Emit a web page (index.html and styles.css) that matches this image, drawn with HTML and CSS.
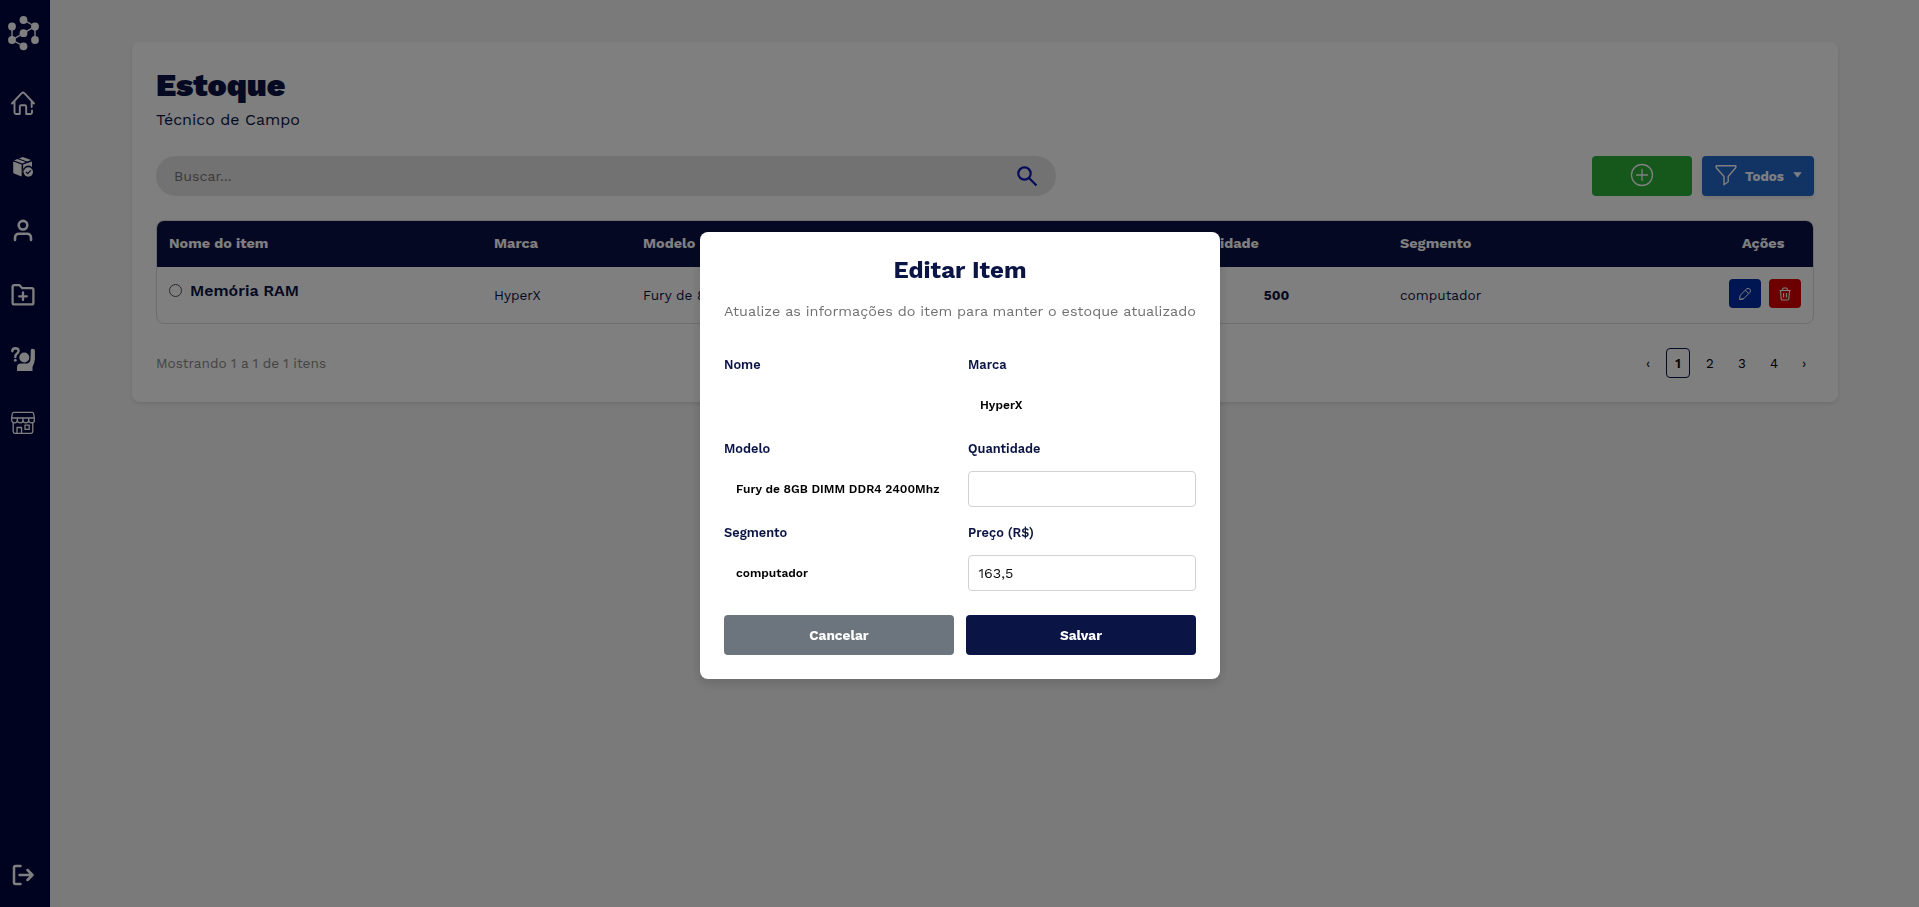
FILE: index.html
```html
<!DOCTYPE html>
<html lang="pt-BR">
<head>
<meta charset="utf-8">
<title>Estoque</title>
<link rel="stylesheet" href="styles.css">
</head>
<body>
<div class="app">
  <nav class="sidebar">
    <svg class="logo" width="34" height="36" viewBox="0 0 34 36"><g fill="none" stroke="#fff" stroke-width="1.4"><path d="M6 10.500V24L17.500 17.200 29 10.500V24M17.500 3.800 29 10.500M6 24 17.500 30.200"/></g><g fill="#fff"><circle cx="6" cy="10.500" r="3.900"/><circle cx="6" cy="24" r="3.900"/><circle cx="17.500" cy="4" r="3.900"/><circle cx="17.500" cy="17.200" r="3.900"/><circle cx="17.500" cy="30.300" r="3.900"/><circle cx="29" cy="10.500" r="3.900"/><circle cx="29" cy="24" r="3.900"/></g></svg>
    <svg class="nav-icon" viewBox="0 0 24 24"><path d="M1 12.500 10.700 2.200Q12 1 13.300 2.200L23 12.500M3.500 10.500V21.500Q3.500 23 5 23H8.800V15.800Q8.800 14.300 10.300 14.300H13.700Q15.200 14.300 15.200 15.800V23H19.500Q21 23 21 21.500V19.500M20.700 10.500V16" stroke-width="1.900"/></svg>
    <svg class="nav-icon" viewBox="0 0 24 24"><g fill="#fff" stroke="none"><path d="M2.200 6.400 10.600 9.500V21.500L3 18.400Q2.200 18 2.200 17.200Z"/><path d="M3 5.500 6.300 4.100 14.700 7.100 11.500 8.600ZM7.800 3.400 11.700 2.100 20.200 5 16.200 6.500Z"/><path d="M12.100 9.500 21 6.400V12.100A5.600 5.600 0 0 0 12.200 18.500Z"/><circle cx="17.300" cy="17" r="4.700"/></g><path d="M15.200 17.200 16.700 18.700 19.600 15.600" stroke="#000640" stroke-width="1.2"/></svg>
    <svg class="nav-icon" viewBox="0 0 24 24"><circle cx="12" cy="6.200" r="4.300" stroke-width="2.600"/><path d="M4 21V19Q4 14.700 8 14.700H16Q20 14.700 20 19V21" stroke-width="2.600"/></svg>
    <svg class="nav-icon" viewBox="0 0 24 24"><path d="M3.300 2.200H8.500L11.300 5.200H20.700Q22.400 5.200 22.400 6.900V19.700Q22.400 21.400 20.700 21.400H3.300Q1.600 21.400 1.600 19.700V3.900Q1.600 2.200 3.300 2.200ZM12 9.500V17M8.200 13.300H15.800" stroke-width="2.300"/></svg>
    <svg class="nav-icon" viewBox="0 0 24 24"><path d="M1.300 4.200Q1.500 1.400 4.300 1.300 7.700 1.400 7.600 4 7.500 5.700 5.500 7 4.300 8 4.300 10" stroke-width="2.400"/><g fill="#fff" stroke="none"><circle cx="4.300" cy="13.300" r="1.400"/><circle cx="13.300" cy="10.500" r="5"/><path d="M19.800 3Q20 1.600 21.500 1.700 23.800 1.800 23.900 3.300V12Q23.600 16 21.500 20V24.200H6V20.500Q6 16.500 10 16.500H16.500Q19.300 15.500 19.500 12Z"/></g></svg>
    <svg class="nav-icon" viewBox="0 0 24 24"><path d="M3 1.300H21Q22.500 1.300 22.700 3L23.400 7.200V9A2.800 2.800 0 0 1 17.700 9 2.850 2.850 0 0 1 12 9 2.850 2.850 0 0 1 6.300 9 2.850 2.850 0 0 1 .6 9V7.200L1.300 3Q1.500 1.300 3 1.300ZM.6 7H23.400M6.300 7V9M12 7V9M17.700 7V9M2.200 12V20.500Q2.200 22.300 4 22.300H20Q21.800 22.300 21.800 20.500V12M6 22V16.500H10.500V22M14 14.200H18.200V18.400H14Z" stroke-width="1.300"/></svg>
    <svg class="nav-icon logout" viewBox="0 0 24 24"><path d="M9.500 3H4.500Q3 3 3 4.500V19.500Q3 21 4.500 21H9.500M8.500 12H21M16.500 7 21.500 12 16.500 17" stroke-width="2.500"/></svg>
  </nav>
  <main class="content">
    <section class="card">
      <h1 class="title">Estoque</h1>
      <p class="role">Técnico de Campo</p>
      <div class="toolbar">
        <div class="search"><span>Buscar...</span>
          <svg width="22" height="22" viewBox="0 0 22 22"><g fill="none" stroke="#0a14b4" stroke-width="2.200"><circle cx="8.500" cy="8.500" r="6.200"/><path d="M12.800 12.800 20.500 20.500"/></g></svg>
        </div>
        <button class="btn-add"><svg width="24" height="24" viewBox="0 0 24 24"><g fill="none" stroke="#fff" stroke-width="1.300"><circle cx="12" cy="12" r="10.500"/><path d="M12 6.500V17.500M6.500 12H17.500" stroke-linecap="round"/></g></svg></button>
        <button class="btn-filter"><svg width="24" height="24" viewBox="0 0 24 24"><path d="M2.200 2.700H21.800Q22.300 4 21.500 5L14.200 13.500V18.800L10 21.800V13.500L2.500 5Q1.700 4 2.200 2.700Z" fill="none" stroke="#fff" stroke-width="1.400" stroke-linejoin="round"/></svg><span>Todos</span><svg class="caret" width="9" height="6" viewBox="0 0 9 6"><path d="M.8 .5H8.200L4.500 5.300Z" fill="#fff" stroke="#fff" stroke-width=".6" stroke-linejoin="round"/></svg></button>
      </div>
      <div class="table">
        <div class="row head"><div>Nome do item</div><div>Marca</div><div>Modelo</div><div class="qty">Quantidade</div><div>Segmento</div><div class="acts">Ações</div></div>
        <div class="row body">
          <div class="item"><i class="radio"></i><span>Memória RAM</span></div><div>HyperX</div><div>Fury de 8GB DIMM DDR4 2400Mhz</div><div class="amount">500</div><div class="segment">computador</div>
          <div class="actions">
            <button class="edit"><svg width="16" height="16" viewBox="0 0 16 16"><path d="M2.500 13.500 3.200 9.300 9.500 3Q11 1.700 12.700 3 14.200 4.700 13 6.300L6.700 12.700ZM8.200 4.500Q9.500 4.700 10.200 6 11 7 11.700 7.500M3 13.500 6.700 12.700" fill="none" stroke="#fff" stroke-width="1"/></svg></button>
            <button class="delete"><svg width="16" height="16" viewBox="0 0 16 16"><path d="M2.500 4.500H13.500M5.700 4.300V3Q5.700 2 6.700 2H9.300Q10.300 2 10.300 3V4.300M3.500 4.700 4.200 13Q4.300 14 5.300 14H10.700Q11.700 14 11.800 13L12.500 4.700M6.600 7V11.500M9.400 7V11.500" fill="none" stroke="#fff" stroke-width="1.100"/></svg></button>
          </div>
        </div>
      </div>
      <div class="footer"><span class="count">Mostrando 1 a 1 de 1 itens</span>
        <div class="pages"><span class="arrow">‹</span><span class="current">1</span><span>2</span><span>3</span><span>4</span><span class="arrow">›</span></div>
      </div>
    </section>
  </main>
</div>
<div class="overlay">
  <form class="modal">
    <h2>Editar Item</h2>
    <p class="hint">Atualize as informações do item para manter o estoque atualizado</p>
    <div class="fields">
      <div class="field"><label>Nome</label><div class="value"></div></div>
      <div class="field"><label>Marca</label><div class="value">HyperX</div></div>
      <div class="field"><label>Modelo</label><div class="value">Fury de 8GB DIMM DDR4 2400Mhz</div></div>
      <div class="field"><label>Quantidade</label><div class="input"></div></div>
      <div class="field"><label>Segmento</label><div class="value">computador</div></div>
      <div class="field"><label>Preço (R$)</label><div class="input">163,5</div></div>
    </div>
    <div class="buttons"><button type="button" class="cancel">Cancelar</button><button type="button" class="save">Salvar</button></div>
  </form>
</div>
</body>
</html>
```
FILE: styles.css
```css
* { box-sizing: border-box; }
body { margin: 0; font-family: "Work Sans", Inter, sans-serif; background: #f5f5f5; color: #0a1445; overflow: hidden; }
h1, h2, p { margin: 0; }
button { border: 0; padding: 0; font: inherit; color: #fff; display: flex; align-items: center; justify-content: center; }
.app { display: flex; height: 100vh; }
.sidebar { width: 50px; flex: none; background: #000640; display: flex; flex-direction: column; align-items: center; padding: 16px 4px 20px 0; }
.logo { margin-bottom: 39px; }
.nav-icon { width: 24px; height: 24px; flex: none; margin-bottom: 40px; fill: none; stroke: #fff; stroke-linecap: round; stroke-linejoin: round; }
.logout { margin: auto 0 0; }
.content { flex: 1; padding: 42px 81px 0 82px; }
.card { height: 360px; background: #fff; border-radius: 8px; padding: 24px; box-shadow: 0 2px 4px rgba(0,0,0,.1); }
.title { font-size: 32px; line-height: 38px; font-weight: 900; }
.role { font-size: 16px; line-height: 24px; margin-top: 4px; }
.toolbar { display: flex; gap: 10px; margin-top: 24px; height: 40px; }
.search { width: 900px; margin-right: auto; border-radius: 20px; background: #e5e5e5; display: flex; align-items: center; justify-content: space-between; padding: 0 18px; font-size: 14.2px; color: #757575; }
.btn-add { width: 100px; background: #2cae39; border-radius: 4px; padding: 0 1px 3px 0; }
.btn-filter { width: 112px; background: #2569c9; border-radius: 4px; font-size: 13.33px; font-weight: 700; gap: 7px; box-shadow: 0 2px 4px rgba(0,0,0,.1); }
.btn-filter svg { margin-bottom: 3px; }
.btn-filter .caret { margin: 0 0 2px 2px; }
.table { margin-top: 24px; height: 104px; border: 1px solid #dcdcdc; border-radius: 8px; overflow: hidden; }
.row { display: grid; grid-template-columns: 325px 149px 512px 245px 329px 1fr; align-items: center; font-size: 13.6px; }
.row > div { padding-left: 12px; white-space: nowrap; }
.head { height: 46px; background: #0a1145; color: #fff; font-size: 14.4px; font-weight: 700; padding-bottom: 2px; }
.head .qty { padding-left: 34px; }
.head .acts { padding-left: 25px; }
.body { height: 56px; }
.body .item { display: flex; align-items: center; gap: 8px; font-size: 16px; font-weight: 600; padding-bottom: 9px; }
.radio { width: 13px; height: 13px; border: 1px solid #555; border-radius: 50%; }
.body .amount { font-weight: 700; text-align: center; padding-left: 22px; }
.body .actions { display: flex; gap: 8px; padding: 0 0 3px 12px; }
.actions button { width: 32px; height: 29px; border-radius: 4px; }
.edit { background: #002ca6; }
.delete { background: #d80000; }
.footer { margin-top: 24px; height: 30px; display: flex; justify-content: space-between; align-items: center; font-size: 13.6px; }
.count { color: #888; }
.pages { display: flex; gap: 8px; color: #000; font-size: 13.33px; }
.pages span { width: 24px; height: 30px; display: flex; align-items: center; justify-content: center; }
.pages .arrow { width: 20px; }
.pages .current { border: 1px solid #0a1445; border-radius: 4px; font-weight: 600; }
.overlay { position: fixed; inset: 0; background: rgba(0,0,0,.5); display: flex; justify-content: center; padding: 232px 0 0 1px; align-items: flex-start; }
.modal { width: 520px; height: 447px; padding: 24px; border-radius: 8px; background: #fff; box-shadow: 0 4px 12px rgba(0,0,0,.15); }
.modal h2 { text-align: center; font-size: 24px; line-height: 28px; font-weight: 700; }
.hint { font-size: 14.4px; line-height: 20px; margin-top: 17px; color: #707070; white-space: nowrap; text-align: center; }
.fields { display: grid; grid-template-columns: 228px 228px; gap: 16px; margin-top: 34px; }
.field { height: 68px; }
.field label { display: block; line-height: 16px; font-size: 12.8px; font-weight: 600; margin: 2px 0 14px; }
.value { height: 36px; line-height: 36px; padding-left: 12px; font-size: 12px; font-weight: 600; color: #000; white-space: nowrap; }
.input { height: 36px; line-height: 35px; border: 1px solid #d2d2d2; border-radius: 4px; padding-left: 9.5px; font-size: 14.4px; color: #111; }
.buttons { display: grid; grid-template-columns: 1fr 1fr; gap: 12px; margin-top: 24px; }
.buttons button { height: 40px; border-radius: 4px; font-size: 13.6px; font-weight: 700; padding-bottom: 1px; }
.cancel { background: #6c757d; }
.save { background: #0a1445; }
```
